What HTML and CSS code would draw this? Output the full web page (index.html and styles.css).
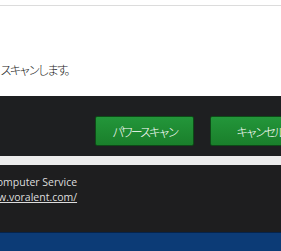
FILE: index.html
```html
<!DOCTYPE html>
<html lang="ja">
<head>
    <meta charset="UTF-8">
    <title>パワースキャン</title>
    <link rel="stylesheet" href="styles.css">
</head>
<body>
    <div class="top-rule"></div>

    <div class="message">
        <p>スキャンします。</p>
    </div>

    <div class="actions">
        <button class="btn">パワースキャン</button>
        <button class="btn">キャンセル</button>
    </div>

    <div class="gap"></div>

    <div class="footer">
        <p class="company">Voralent Computer Service</p>
        <a class="site" href="http://www.voralent.com/">http://www.voralent.com/</a>
    </div>

    <div class="taskbar"></div>
</body>
</html>
```

FILE: styles.css
```css
* {
    margin: 0;
    padding: 0;
    box-sizing: border-box;
}

body {
    font-family: "Noto Sans CJK JP", "DejaVu Sans", sans-serif;
    background-color: #ffffff;
    width: 281px;
    overflow: hidden;
}

.top-rule {
    margin-top: 5px;
    height: 1px;
    background-color: #dcdcdc;
}

.message {
    height: 90px;
    padding-top: 55px;
    font-size: 12px;
    font-weight: 300;
    letter-spacing: -2.6px;
    color: #1a1a1a;
}

.actions {
    display: flex;
    gap: 16px;
    height: 60px;
    padding: 20px 0 0 95px;
    background-color: #1e1f21;
    white-space: nowrap;
}

.btn {
    flex: none;
    width: 99px;
    height: 30px;
    border: 1px solid #0d4a17;
    border-radius: 2px;
    background: linear-gradient(#23963a, #1a7f2b);
    color: #ffffff;
    font-family: "Noto Sans CJK JP", sans-serif;
    font-size: 12px;
    font-weight: 300;
    letter-spacing: -2.7px;
}

.gap {
    height: 9px;
    background-color: #ececec;
}

.footer {
    height: 67px;
    padding-top: 10px;
    background-color: #1e1e1f;
    font-family: "Open Sans", sans-serif;
    font-size: 10.5px;
    line-height: 15px;
    color: #dddddd;
    white-space: nowrap;
}

.company {
    text-indent: -54px;
}

.site {
    display: block;
    text-indent: -49px;
    color: #dddddd;
}

.taskbar {
    height: 19px;
    border-top: 1px solid #06234a;
    background-color: #0c3b76;
}
```
